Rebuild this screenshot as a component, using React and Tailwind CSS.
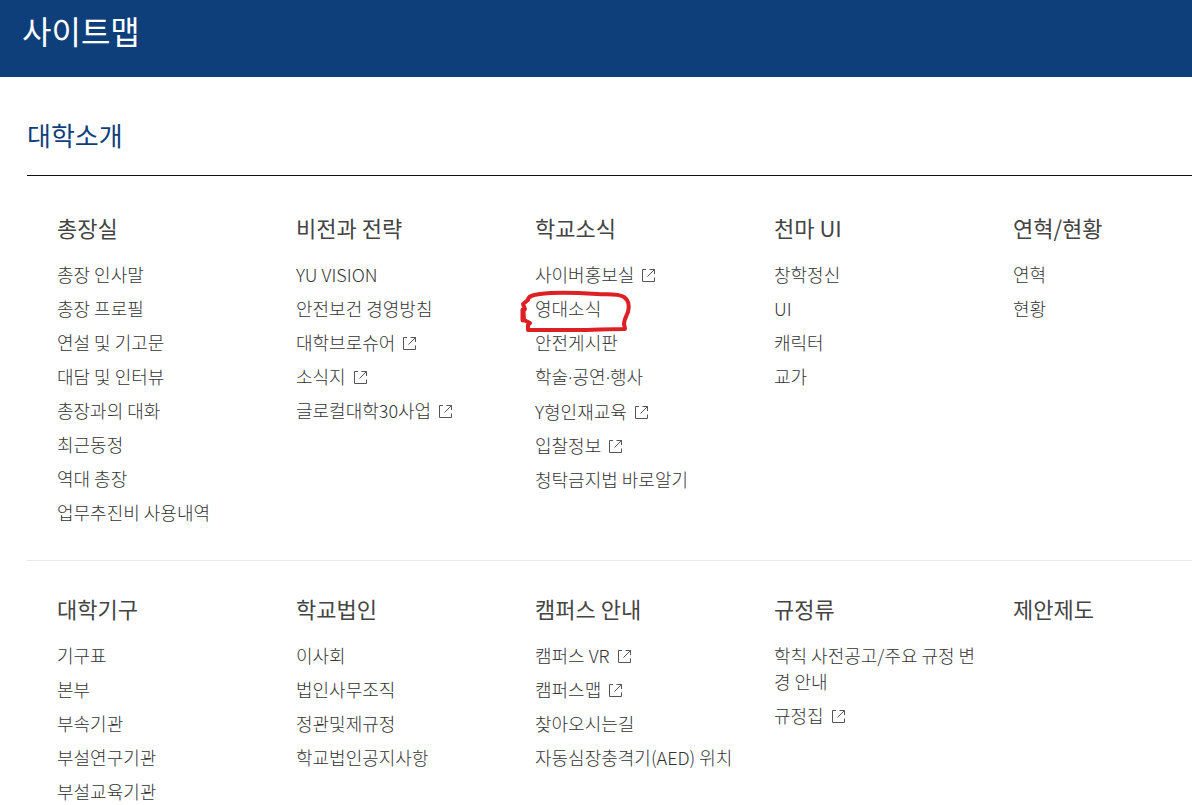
const sections = [
  [
    {
      title: "총장실",
      items: [
        { label: "총장 인사말" },
        { label: "총장 프로필" },
        { label: "연설 및 기고문" },
        { label: "대담 및 인터뷰" },
        { label: "총장과의 대화" },
        { label: "최근동정" },
        { label: "역대 총장" },
        { label: "업무추진비 사용내역" },
      ],
    },
    {
      title: "비전과 전략",
      items: [
        { label: "YU VISION" },
        { label: "안전보건 경영방침" },
        { label: "대학브로슈어", external: true },
        { label: "소식지", external: true },
        { label: "글로컬대학30사업", external: true },
      ],
    },
    {
      title: "학교소식",
      items: [
        { label: "사이버홍보실", external: true },
        { label: "영대소식", marked: true },
        { label: "안전게시판" },
        { label: "학술·공연·행사", narrowDot: true },
        { label: "Y형인재교육", external: true },
        { label: "입찰정보", external: true },
        { label: "청탁금지법 바로알기" },
      ],
    },
    {
      title: "천마 UI",
      items: [
        { label: "창학정신" },
        { label: "UI" },
        { label: "캐릭터" },
        { label: "교가" },
      ],
    },
    {
      title: "연혁/현황",
      items: [{ label: "연혁" }, { label: "현황" }],
    },
  ],
  [
    {
      title: "대학기구",
      items: [
        { label: "기구표" },
        { label: "본부" },
        { label: "부속기관" },
        { label: "부설연구기관" },
        { label: "부설교육기관" },
      ],
    },
    {
      title: "학교법인",
      items: [
        { label: "이사회" },
        { label: "법인사무조직" },
        { label: "정관및제규정" },
        { label: "학교법인공지사항" },
      ],
    },
    {
      title: "캠퍼스 안내",
      items: [
        { label: "캠퍼스 VR", external: true },
        { label: "캠퍼스맵", external: true },
        { label: "찾아오시는길" },
        { label: "자동심장충격기(AED) 위치" },
      ],
    },
    {
      title: "규정류",
      items: [
        { label: "학칙 사전공고/주요 규정 변경 안내" },
        { label: "규정집", external: true },
      ],
    },
    { title: "제안제도", items: [] },
  ],
];

function ExternalIcon() {
  return (
    <svg
      className="ml-2 inline-block h-[13px] w-[13px] align-baseline"
      viewBox="0 0 13 13"
      fill="none"
      stroke="#555"
      aria-hidden="true"
    >
      <path d="M4 .5H.5v12h12V8.500" />
      <path d="M7.500 .5h5v4.500M12.500 .5L5.500 7.500" />
    </svg>
  );
}

// hand-drawn marker loop around a link
function MarkerLoop() {
  return (
    <svg
      className="pointer-events-none absolute -top-[7px] -left-[17px] h-[46px] w-[116px] max-w-none"
      viewBox="0 0 116 46"
      fill="none"
      stroke="#dc2024"
      strokeWidth="4"
      strokeLinecap="round"
      strokeLinejoin="round"
      aria-hidden="true"
    >
      <path d="M10 12C10 8 15 7 22 6C38 4 62 5 79 6C88 7 99 5 106 9C112 13 111 20 110 24C108 29 106 32 106 36L107 41C90 41 75 42 58 42L10 42V37L12 35L6 32L5 23L7 21L5 16L10 12" />
      <path d="M5 22V32" strokeWidth="5" />
    </svg>
  );
}

function MenuGroup({ title, items }) {
  return (
    <div className="pr-7">
      <h3 className="mb-[17px] text-[22px] leading-[34px] text-[#444]">
        <a href="#">{title}</a>
      </h3>
      <ul className="space-y-2 text-lg leading-[26px] font-light text-[#333]">
        {items.map((item) => (
          <li key={item.label} className="relative break-all">
            <a
              href="#"
              className={
                item.narrowDot
                  ? "font-['Noto_Sans','Noto_Sans_CJK_KR',sans-serif] hover:underline"
                  : "hover:underline"
              }
            >
              {item.label}
              {item.external && <ExternalIcon />}
            </a>
            {item.marked && <MarkerLoop />}
          </li>
        ))}
      </ul>
    </div>
  );
}

export default function App() {
  return (
    <div className="min-h-screen overflow-hidden bg-white font-['Noto_Sans_CJK_KR',sans-serif]">
      <header className="bg-[#0e3f7b] px-[22px] pt-[6px] pb-[23px]">
        <h1 className="text-[32px] leading-[48px] text-white">사이트맵</h1>
      </header>
      <main className="pl-[27px]">
        <h2 className="border-b border-[#111] pt-[38px] pb-[21px] text-[26px] leading-[39px] text-[#0e3f7b]">
          대학소개
        </h2>
        <div className="grid grid-cols-[repeat(4,239fr)_179fr] border-b border-[#e9e9e9] pt-[34px] pb-[35px] pl-[30px]">
          {sections[0].map((group) => (
            <MenuGroup key={group.title} {...group} />
          ))}
        </div>
        <div className="grid grid-cols-[repeat(4,239fr)_179fr] pt-[30px] pl-[30px]">
          {sections[1].map((group) => (
            <MenuGroup key={group.title} {...group} />
          ))}
        </div>
      </main>
    </div>
  );
}
